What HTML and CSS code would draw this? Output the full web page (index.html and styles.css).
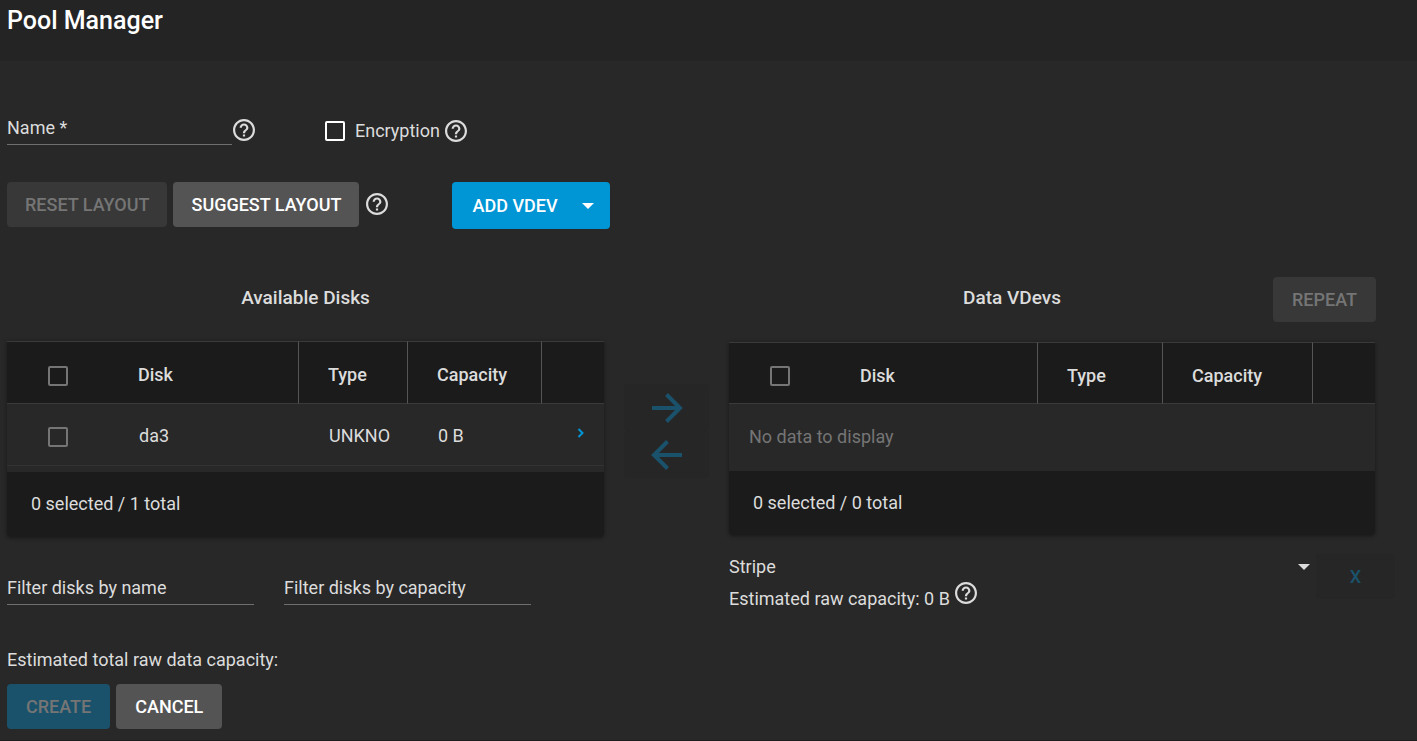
FILE: index.html
```html
<!DOCTYPE html>
<html lang="en">
<head>
  <meta charset="UTF-8">
  <meta name="viewport" content="width=device-width, initial-scale=1.0">
  <title>Pool Manager</title>
  <link rel="stylesheet" href="styles.css">
</head>
<body>
  <svg class="sprite" aria-hidden="true">
    <symbol id="help" viewBox="2 2 20 20">
      <path d="M11 18h2v-2h-2v2zm1-16C6.48 2 2 6.48 2 12s4.480 10 10 10 10-4.480 10-10S17.520 2 12 2zm0 18c-4.410 0-8-3.590-8-8s3.590-8 8-8 8 3.590 8 8-3.590 8-8 8zm0-14c-2.210 0-4 1.790-4 4h2c0-1.100.9-2 2-2s2 .9 2 2c0 2-3 1.750-3 5h2c0-2.250 3-2.500 3-5 0-2.210-1.790-4-4-4z"/>
    </symbol>
  </svg>

  <header class="page-header">
    <h1>Pool Manager</h1>
  </header>

  <main>
    <div class="form-row">
      <div class="field name-field">
        <label for="poolName">Name *</label>
        <input type="text" id="poolName" required>
      </div>
      <svg class="help"><use href="#help"/></svg>
      <div class="encryption">
        <input type="checkbox" id="encryption">
        <label for="encryption">Encryption</label>
        <svg class="help"><use href="#help"/></svg>
      </div>
    </div>

    <div class="button-row layout-buttons">
      <button class="btn" disabled>RESET LAYOUT</button>
      <button class="btn">SUGGEST LAYOUT</button>
      <svg class="help"><use href="#help"/></svg>
      <button class="btn btn-add">ADD VDEV <span class="caret"></span></button>
    </div>

    <div class="columns">
      <section>
        <div class="section-head">
          <h2>Available Disks</h2>
        </div>
        <div class="card">
          <table>
            <colgroup>
              <col class="col-check"><col><col class="col-type"><col class="col-capacity"><col class="col-action">
            </colgroup>
            <thead>
              <tr>
                <th class="check"><input type="checkbox" aria-label="Select all disks"></th>
                <th>Disk</th>
                <th>Type</th>
                <th>Capacity</th>
                <th></th>
              </tr>
            </thead>
            <tbody>
              <tr>
                <td class="check"><input type="checkbox" aria-label="Select da3"></td>
                <td>da3</td>
                <td>UNKNO</td>
                <td>0 B</td>
                <td class="action">
                  <button class="expand" aria-label="Expand da3">
                    <svg viewBox="0 0 8 10"><path d="M1.500 1l4 4-4 4"/></svg>
                  </button>
                </td>
              </tr>
            </tbody>
          </table>
          <div class="card-footer disks-footer">0 selected / 1 total</div>
        </div>
        <div class="filters">
          <div class="field">
            <label for="filterName">Filter disks by name</label>
            <input type="text" id="filterName">
          </div>
          <div class="field">
            <label for="filterCapacity">Filter disks by capacity</label>
            <input type="text" id="filterCapacity">
          </div>
        </div>
      </section>

      <div class="transfer">
        <button class="btn-flat" disabled aria-label="Move to vdev">
          <svg viewBox="0 0 32 32"><path d="M1 16h28M15.500 2.500L29 16 15.500 29.500"/></svg>
        </button>
        <button class="btn-flat" disabled aria-label="Remove from vdev">
          <svg viewBox="0 0 32 32"><path d="M31 16H3M16.500 2.500L3 16l13.500 13.500"/></svg>
        </button>
      </div>

      <section>
        <div class="section-head vdev-head">
          <h2>Data VDevs</h2>
          <button class="btn" disabled>REPEAT</button>
        </div>
        <div class="card vdev-card">
          <table>
            <colgroup>
              <col class="col-check"><col><col class="col-type-wide"><col class="col-capacity-wide"><col class="col-action">
            </colgroup>
            <thead>
              <tr>
                <th class="check"><input type="checkbox" aria-label="Select all vdev disks"></th>
                <th>Disk</th>
                <th>Type</th>
                <th>Capacity</th>
                <th></th>
              </tr>
            </thead>
            <tbody>
              <tr>
                <td class="empty" colspan="5">No data to display</td>
              </tr>
            </tbody>
          </table>
          <div class="card-footer">0 selected / 0 total</div>
        </div>
        <div class="vdev-options">
          <div class="vdev-type">
            <div class="select-wrap">
              <select aria-label="VDev type">
                <option>Stripe</option>
              </select>
              <span class="caret"></span>
            </div>
            <div class="raw-capacity">
              <span>Estimated raw capacity: 0 B</span>
              <svg class="help"><use href="#help"/></svg>
            </div>
          </div>
          <button class="btn-flat btn-remove" disabled>X</button>
        </div>
      </section>
    </div>

    <p class="total">Estimated total raw data capacity:</p>
    <div class="button-row">
      <button class="btn btn-create" disabled>CREATE</button>
      <button class="btn">CANCEL</button>
    </div>
  </main>
</body>
</html>
```
FILE: styles.css
```css
* {
  box-sizing: border-box;
}

body {
  margin: 0;
  background-color: #282828;
  color: #dcdcdc;
  font-family: Roboto, "Liberation Sans", sans-serif;
  font-size: 18px;
  line-height: 24px;
}

.sprite {
  position: absolute;
  width: 0;
  height: 0;
}

.page-header {
  height: 61px;
  padding: 5px 7px;
  background-color: #242424;
}

h1 {
  margin: 0;
  color: #fff;
  font-size: 25px;
  font-weight: 500;
  line-height: 32px;
}

h2 {
  margin: 0;
  font-size: 19px;
  font-weight: 500;
}

main {
  padding: 53px 22px 11px 7px;
  border-bottom: 1px solid #1e1e1e;
}

/* fields */
.form-row {
  display: flex;
  align-items: center;
}

.field {
  display: grid;
  flex: 1;
  border-bottom: 1px solid #6f6f6f;
}

.field label,
.field input {
  grid-area: 1 / 1;
  line-height: 28px;
}

.field label {
  pointer-events: none;
}

.field input {
  width: 100%;
  height: 30px;
  padding: 0;
  border: none;
  outline: none;
  background: none;
  color: inherit;
  font: inherit;
}

.name-field {
  flex: 0 0 225px;
}

.help {
  flex: none;
  width: 22px;
  height: 22px;
  margin-left: 1px;
  fill: #dcdcdc;
}

.encryption {
  display: flex;
  align-items: center;
  margin-left: 70px;
  padding-top: 2px;
}

.encryption label {
  margin: 0 4px 0 10px;
}

input[type="checkbox"] {
  appearance: none;
  display: block;
  width: 20px;
  height: 20px;
  margin: 0;
  border: 2px solid #757575;
  border-radius: 2px;
}

.encryption input[type="checkbox"] {
  border-color: #fff;
}

/* buttons */
.btn {
  height: 45px;
  padding: 0 19px;
  border: none;
  border-radius: 4px;
  background-color: #545454;
  color: #fff;
  font: inherit;
  font-weight: 500;
}

.btn:disabled {
  background-color: #383838;
  color: #757575;
}

.btn-create:disabled {
  background-color: #1b526b;
}

.button-row {
  display: flex;
  gap: 6px;
}

.layout-buttons {
  margin: 37px 0 48px;
}

.layout-buttons .btn {
  padding: 0 18px;
}

.layout-buttons .help {
  margin-top: 11px;
}

.layout-buttons .btn-add {
  display: flex;
  align-items: center;
  gap: 24px;
  height: 47px;
  margin-left: 58px;
  padding: 0 16px 0 20px;
  background-color: #0095d5;
}

.caret {
  width: 0;
  border: 6px solid transparent;
  border-top-color: currentColor;
  border-bottom: none;
}

/* disks and vdevs */
.columns {
  display: grid;
  grid-template-columns: 597fr 125px 666fr;
}

.section-head {
  display: flex;
  justify-content: center;
  height: 64px;
  padding-top: 9px;
}

.vdev-head {
  height: 65px;
  padding: 0 19px 0 22px;
}

.vdev-head h2 {
  flex: 1;
  padding-top: 9px;
  text-align: center;
}

.card {
  border-radius: 0 0 4px 4px;
  box-shadow: 0 1px 4px rgba(0, 0, 0, 0.4);
}

.vdev-card {
  margin-right: 20px;
}

table {
  width: 100%;
  border-collapse: separate;
  border-spacing: 0;
  table-layout: fixed;
}

.col-check {
  width: 102px;
}

.col-type {
  width: 109px;
}

.col-capacity {
  width: 134px;
}

.col-type-wide {
  width: 125px;
}

.col-capacity-wide {
  width: 150px;
}

.col-action {
  width: 62px;
}

th,
td {
  height: 62px;
  padding: 2px 0 0 30px;
  text-align: left;
}

th {
  height: 63px;
  padding: 4px 0 0 29px;
  border-top: 1px solid #3a3a3a;
  border-bottom: 1px solid #3a3a3a;
  background-color: #1b1b1b;
  font-weight: 500;
}

th:not(.check):not(:last-child) {
  border-right: 1px solid #555;
}

th.check,
td.check {
  padding-top: 5px;
  padding-left: 41px;
}

th.check {
  padding-top: 7px;
}

td {
  border-bottom: 1px solid #333;
}

.vdev-card th {
  height: 62px;
  padding-top: 5px;
}

td.empty {
  height: 67px;
  padding: 0 0 2px 20px;
  border: none;
  color: #757575;
}

td.action {
  padding: 0;
}

.expand {
  display: block;
  margin: 0 auto 4px 35px;
  padding: 0;
  border: none;
  background: none;
}

.expand svg {
  display: block;
  width: 8px;
  height: 10px;
  fill: none;
  stroke: #0095d5;
  stroke-width: 2;
}

.card-footer {
  padding: 20px 24px;
  border-radius: 0 0 4px 4px;
  background-color: #1b1b1b;
}

.disks-footer {
  margin-top: 6px;
  padding-bottom: 21px;
}

.filters {
  display: flex;
  gap: 30px;
  margin: 37px 73px 0 0;
}

.btn-flat {
  border: none;
  border-radius: 4px;
  background-color: #262626;
  color: #1b526b;
  font: inherit;
  font-weight: 500;
}

.transfer {
  display: flex;
  flex-direction: column;
  padding: 107px 20px 0;
}

.transfer .btn-flat {
  height: 47px;
  padding: 0;
}

.transfer svg {
  display: block;
  width: 32px;
  height: 32px;
  margin: 0 auto;
  fill: none;
  stroke: currentColor;
  stroke-width: 4;
}

.vdev-options {
  display: flex;
  align-items: flex-start;
  gap: 6px;
  margin-top: 19px;
}

.vdev-type {
  flex: 1;
  padding-top: 1px;
}

.select-wrap {
  display: flex;
  align-items: center;
}

.select-wrap select {
  appearance: none;
  flex: 1;
  height: 24px;
  padding: 0;
  border: none;
  background: none;
  color: inherit;
  font: inherit;
}

.raw-capacity {
  display: flex;
  margin-top: 3px;
}

.raw-capacity span {
  margin: 5px 4px 0 0;
}

.btn-remove {
  width: 79px;
  height: 45px;
}

.total {
  margin: 37px 0 12px;
}
```
